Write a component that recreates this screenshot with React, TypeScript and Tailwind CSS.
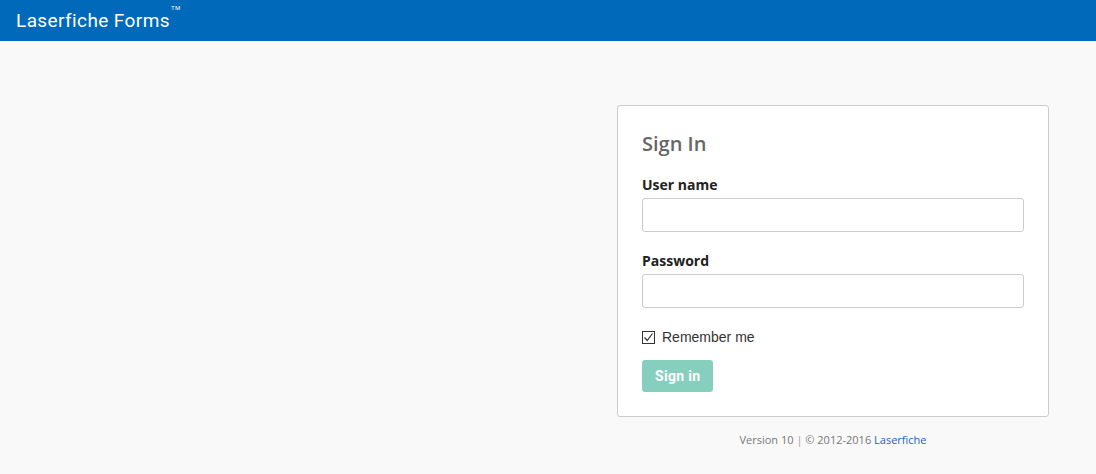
import React, { useState } from "react";

const App: React.FC = () => {
  const [remember, setRemember] = useState<boolean>(true);

  return (
    <div className="min-h-[474px] bg-[#f9f9f9] font-['Open_Sans',sans-serif]">
      {/* Header */}
      <div className="h-[41px] bg-[#0069ba] flex items-center px-4">
        <span className="text-white text-[19px] leading-none font-['Roboto',sans-serif] tracking-[0.4px]">
          Laserfiche Forms
          <sup className="text-[6px] ml-[1px] align-top relative top-[-3px]">TM</sup>
        </span>
      </div>

      {/* Sign in card */}
      <div className="flex justify-end pr-[47px] pt-[64px]">
        <div className="flex flex-col w-[432px]">
          <div className="bg-white border border-[#cccccc] rounded-[3px] px-6 pt-[24px] pb-[24px]">
            <h2 className="text-[20px] text-[#666666] leading-[28px] font-semibold">
              Sign In
            </h2>

            <label className="block mt-[17px] text-[14px] font-bold text-[#222222] leading-[20px]">
              User name
            </label>
            <input
              type="text"
              className="mt-[3px] block w-full h-[34px] border border-[#cccccc] rounded-[3px] bg-white"
            />

            <label className="block mt-[19px] text-[14px] font-bold text-[#222222] leading-[20px]">
              Password
            </label>
            <input
              type="password"
              className="mt-[3px] block w-full h-[34px] border border-[#cccccc] rounded-[3px] bg-white"
            />

            <div className="flex items-center h-[20px] mt-[19px] gap-[7px]">
              <button
                onClick={() => setRemember(!remember)}
                className="w-[13px] h-[13px] border border-[#333333] bg-white flex items-center justify-center"
              >
                {remember && (
                  <svg width="11" height="11" viewBox="0 0 11 11">
                    <path d="M1.5 5.5 L4.2 8.5 L9.5 1.5" fill="none" stroke="#333" strokeWidth="1.2" />
                  </svg>
                )}
              </button>
              <span className="text-[14px] text-[#333333] font-['Liberation_Sans',sans-serif]">
                Remember me
              </span>
            </div>

            <button className="mt-[13px] block h-[32px] px-[13px] rounded-[3px] bg-[#86cfbf] text-white text-[14px] font-bold font-['Roboto',sans-serif] tracking-[0.3px]">
              Sign in
            </button>
          </div>

          {/* Footer */}
          <p className="text-center text-[11px] leading-[16px] text-[#777777] mt-[15px]">
            Version 10 <span className="text-[#b0a090]">|</span> © 2012-2016{" "}
            <a className="text-[#1a62c6]">Laserfiche</a>
          </p>
        </div>
      </div>
    </div>
  );
};

export default App;
